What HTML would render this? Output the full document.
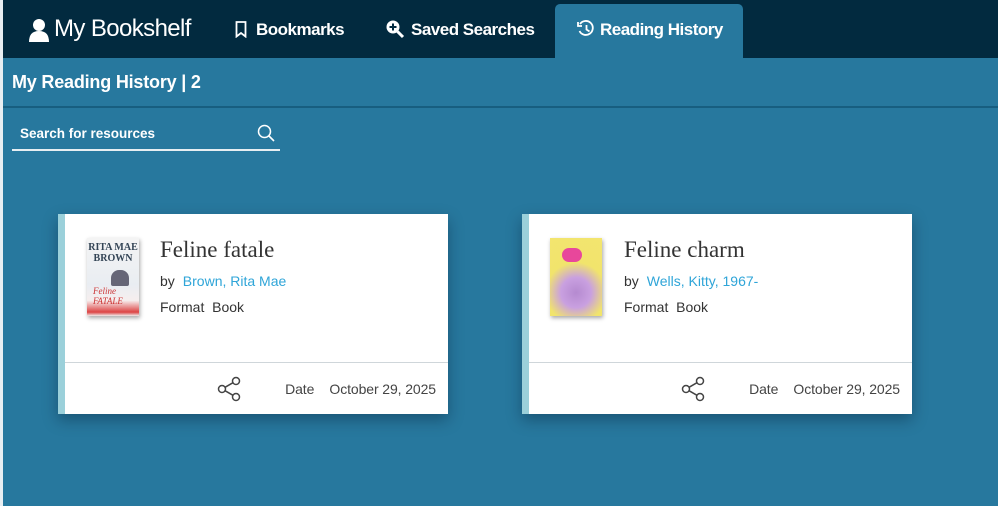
<!DOCTYPE html>
<html><head><meta charset="utf-8"><style>
*{margin:0;padding:0;box-sizing:border-box}
body{width:998px;height:506px;overflow:hidden;background:#27789e;font-family:"Liberation Sans",sans-serif;position:relative}
.top{position:absolute;left:0;top:0;width:998px;height:58px;background:#022a3f}
.edge{position:absolute;left:0;top:0;width:3px;height:506px;background:#e8eef2}
.nav{position:absolute;color:#fff;font-weight:bold;font-size:17px;top:20px;letter-spacing:-0.5px}
.tab{position:absolute;left:555px;top:4px;width:188px;height:56px;background:#27789e;border-radius:5px 5px 0 0}
.h1{position:absolute;left:12px;top:72px;color:#fff;font-weight:bold;font-size:18px;letter-spacing:-0.2px}
.rule{position:absolute;left:3px;top:106px;width:995px;height:2px;background:#175e80}
.search{position:absolute;left:12px;top:124px;width:268px;height:27px;border-bottom:2px solid #e6eef2;color:#fff;font-size:13.5px;font-weight:bold;padding:2px 0 0 8px}
.card{position:absolute;top:214px;width:390px;height:200px;background:#fff;border-left:7px solid #9bd0da;box-shadow:0 6px 14px rgba(0,20,40,.35)}
.cover{position:absolute;left:22px;top:24px;width:52px;height:78px;box-shadow:1px 2px 4px rgba(0,0,0,.35)}
.title{position:absolute;left:95px;top:23px;font-family:"Liberation Serif",serif;font-size:23px;color:#333}
.by{position:absolute;left:95px;top:59px;font-size:14px;color:#333}
.by span{color:#2fa5d8;margin-left:8px}
.fmt{position:absolute;left:95px;top:85px;font-size:14px;color:#333}
.div{position:absolute;left:0;top:148px;width:383px;height:1px;background:#cfd6da}
.date{position:absolute;right:12px;top:167px;font-size:14px;color:#444;letter-spacing:-0.1px}
.share{position:absolute;left:152px;top:162px}
</style></head><body>
<div class="top"></div>
<div class="tab"></div>
<div class="edge"></div>
<svg style="position:absolute;left:28px;top:18px" width="22" height="24" viewBox="0 0 22 24"><circle cx="11" cy="7" r="6" fill="#fff"/><path d="M1 24 Q1 13 11 13 Q21 13 21 24Z" fill="#fff"/></svg>
<div class="nav" style="left:54px;top:15px;font-weight:normal;font-size:24px;letter-spacing:-0.6px">My Bookshelf</div>
<svg style="position:absolute;left:235px;top:21px" width="12" height="17" viewBox="0 0 12 17"><path d="M1.5 1h9v14.5L6 12l-4.5 3.5Z" fill="none" stroke="#fff" stroke-width="1.8"/></svg>
<div class="nav" style="left:256px">Bookmarks</div>
<svg style="position:absolute;left:385px;top:19px" width="20" height="20" viewBox="0 0 20 20"><circle cx="8" cy="8" r="6.5" fill="#fff"/><path d="M8 4.5v7M4.5 8h7" stroke="#022a3f" stroke-width="2"/><path d="M12.5 12.5l5.5 5.5" stroke="#fff" stroke-width="3"/></svg>
<div class="nav" style="left:411px">Saved Searches</div>
<svg style="position:absolute;left:577px;top:20px" width="18" height="18" viewBox="0 0 18 18"><path d="M3 4A7 7 0 1 1 2.5 11" fill="none" stroke="#fff" stroke-width="1.8"/><path d="M1 2v4h4" fill="none" stroke="#fff" stroke-width="1.8"/><path d="M9.5 5v4.5l3 2" fill="none" stroke="#fff" stroke-width="1.8"/></svg>
<div class="nav" style="left:600px">Reading History</div>
<div class="h1">My Reading History | 2</div>
<div class="rule"></div>
<div class="search">Search for resources</div>
<svg style="position:absolute;left:257px;top:124px" width="18" height="18" viewBox="0 0 18 18"><circle cx="7.5" cy="7.5" r="6" fill="none" stroke="#fff" stroke-width="1.5"/><path d="M12 12l5 5" stroke="#fff" stroke-width="1.6"/></svg>

<div class="card" style="left:58px">
 <div class="cover" style="background:linear-gradient(#f4f4f4 0%,#e9edf2 60%,#f6eeee 80%,#d44 95%,#eee 100%)"><div style="font:bold 10px 'Liberation Serif',serif;color:#345;text-align:center;padding-top:4px;line-height:11px">RITA MAE<br>BROWN</div><div style="width:18px;height:16px;background:#667;border-radius:8px 8px 2px 2px;margin:6px 0 0 24px"></div><div style="font:italic 9px serif;color:#c33;padding-left:6px">Feline FATALE</div></div>
 <div class="title">Feline fatale</div>
 <div class="by">by<span>Brown, Rita Mae</span></div>
 <div class="fmt">Format&nbsp; Book</div>
 <div class="div"></div>
 <svg class="share" width="26" height="26" viewBox="0 0 26 26"><circle cx="19" cy="5" r="3.5" fill="none" stroke="#444" stroke-width="1.5"/><circle cx="5" cy="13" r="3.5" fill="none" stroke="#444" stroke-width="1.5"/><circle cx="19" cy="21" r="3.5" fill="none" stroke="#444" stroke-width="1.5"/><path d="M8 11.3L16 6.7M8 14.7L16 19.3" stroke="#444" stroke-width="1.5"/></svg>
 <div class="date">Date&nbsp;&nbsp;&nbsp; October 29, 2025</div>
</div>

<div class="card" style="left:522px">
 <div class="cover" style="left:21px;background:radial-gradient(circle at 50% 70%,#b58ad0 0%,#c9a0e0 25%,#f1e46c 50%,#f3e56f 100%)"><div style="width:20px;height:14px;background:#e8479b;border-radius:7px;margin:10px 0 0 12px"></div></div>
 <div class="title">Feline charm</div>
 <div class="by">by<span>Wells, Kitty, 1967-</span></div>
 <div class="fmt">Format&nbsp; Book</div>
 <div class="div"></div>
 <svg class="share" width="26" height="26" viewBox="0 0 26 26"><circle cx="19" cy="5" r="3.5" fill="none" stroke="#444" stroke-width="1.5"/><circle cx="5" cy="13" r="3.5" fill="none" stroke="#444" stroke-width="1.5"/><circle cx="19" cy="21" r="3.5" fill="none" stroke="#444" stroke-width="1.5"/><path d="M8 11.3L16 6.7M8 14.7L16 19.3" stroke="#444" stroke-width="1.5"/></svg>
 <div class="date">Date&nbsp;&nbsp;&nbsp; October 29, 2025</div>
</div>
</body></html>
